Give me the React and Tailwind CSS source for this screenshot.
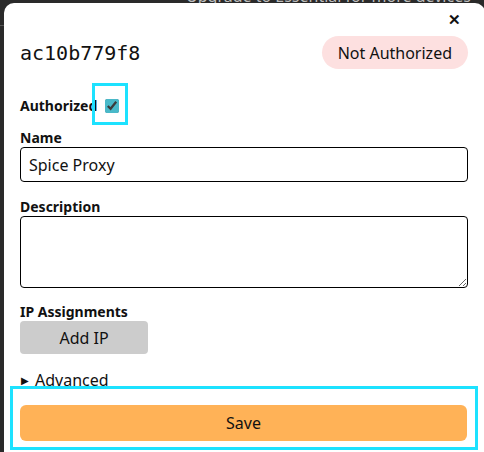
import { useState } from 'react'

export default function App() {
  const [authorized, setAuthorized] = useState(true)
  const [name, setName] = useState('Spice Proxy')
  const [description, setDescription] = useState('')

  return (
    <div className="relative w-[484px] h-[452px] overflow-hidden bg-[#2a2a2a]" style={{ fontFamily: '"Noto Sans", sans-serif' }}>
      {/* page behind the dialog, only its bottom edge shows */}
      <div className="absolute left-[186px] top-0 w-[298px] h-[4px] overflow-hidden">
        <div className="-mt-[16px] text-[#bdbdbd] text-base whitespace-nowrap">Upgrade to Essential for more devices</div>
      </div>
      <div className="absolute left-0 top-[25px] w-[4px] h-px bg-[#555]" />

      {/* Dialog */}
      <div className="absolute left-[4px] top-[3px] w-[481px] h-[480px] bg-white rounded-t-[10px] pl-4 pr-[17px] pt-[5px] text-[#111]">
        <div className="flex justify-end h-[22px] items-center">
          <button className="mr-[7px] text-[15px] font-bold leading-none">✕</button>
        </div>

        <div className="flex items-center justify-between h-[33px] mt-[6px]">
          <h2 className="text-[20px] leading-none" style={{ fontFamily: '"DejaVu Sans Mono", monospace' }}>ac10b779f8</h2>
          <span className="h-[33px] px-4 flex items-center rounded-full bg-[#fde0e0] text-base">Not Authorized</span>
        </div>

        <div className="flex items-center h-[42px] mt-[14px]">
          <label className="w-[72px] mt-[4px] text-sm font-bold whitespace-nowrap">Authorized</label>
          <div className="w-[36px] h-[42px] border-[3px] border-[#1de2ff] flex items-center justify-center">
            <input type="checkbox" checked={authorized} onChange={e => setAuthorized(e.target.checked)}
              className="w-[14px] h-[14px] mt-[4px] ml-[4px] accent-[#49b9c9]" />
          </div>
        </div>

        <label className="block text-sm font-bold leading-[18px] mt-[4px]">Name</label>
        <input value={name} onChange={e => setName(e.target.value)}
          className="block w-full h-[35px] border border-black rounded-[4px] px-2 text-base outline-none" />

        <label className="block text-sm font-bold leading-[18px] mt-[16px]">Description</label>
        <textarea value={description} onChange={e => setDescription(e.target.value)}
          className="block w-full h-[72px] border border-black rounded-[4px] px-2 text-base outline-none" />

        <label className="block text-sm font-bold leading-[18px] mt-[15px]">IP Assignments</label>
        <button className="block w-[128px] h-[33px] bg-[#cccccc] rounded-[4px] text-base">Add IP</button>

        <div className="flex items-center h-[20px] mt-[16px] text-base">
          <span className="text-[10px] ml-[1px] mr-[6px]">▶</span>
          Advanced
        </div>

        <div className="-ml-[10px] -mt-[4px] w-[468px] h-[64px] border-[3px] border-[#1de2ff] bg-white pl-[7px] pr-[8px] pt-[16px]">
          <button className="w-full h-[36px] bg-[#ffb257] rounded-[6px] text-base">Save</button>
        </div>
      </div>
    </div>
  )
}
